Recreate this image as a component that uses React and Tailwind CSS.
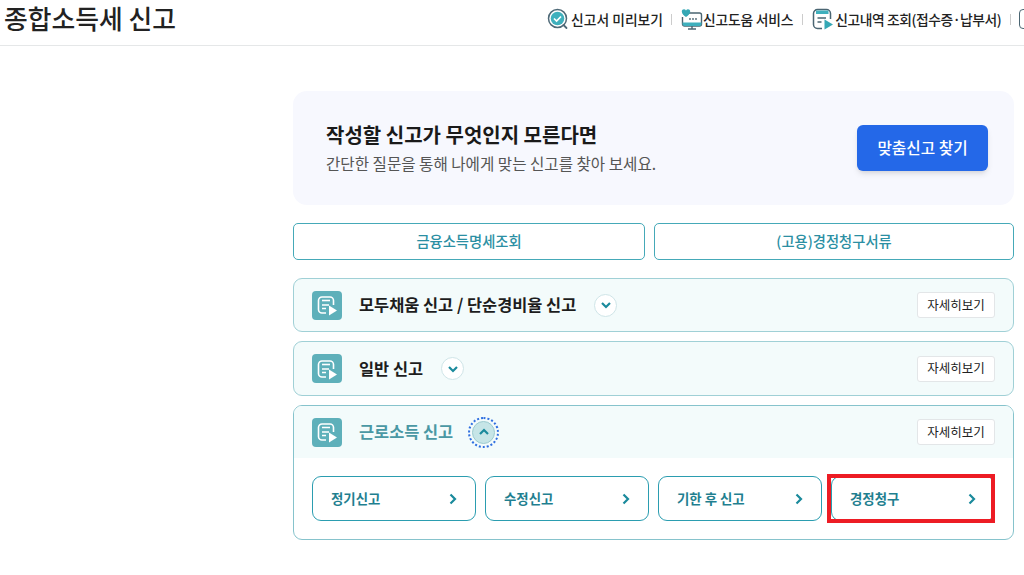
import React from 'react';

const KR = "font-['Noto_Sans_CJK_KR','Noto_Sans',sans-serif]";

function PreviewIcon() {
  return (
    <svg width="22" height="22" viewBox="0 0 22 22" fill="none">
      <circle cx="10.5" cy="10.5" r="9" stroke="#4f6a78" strokeWidth="1.5" />
      <circle cx="10.500" cy="10.500" r="6.800" fill="#3fb0bd" />
      <path d="M7 10.500l2.600 2.600 4.400-4.600" stroke="#fff" strokeWidth="1.700" fill="none" />
      <path d="M16.500 17l3 3" stroke="#4f6a78" strokeWidth="1.800" strokeLinecap="round" />
    </svg>
  );
}

function HelpIcon() {
  return (
    <svg width="22" height="22" viewBox="0 0 22 22" fill="none">
      <path d="M8 5h10.500A2 2 0 0 1 20.500 7v9a2 2 0 0 1-2 2h-15a2 2 0 0 1-2-2V9" stroke="#4a6572" strokeWidth="1.400" fill="#fff" />
      <path d="M1.500 14.500h19V16a2 2 0 0 1-2 2h-15a2 2 0 0 1-2-2z" fill="#3fb0bd" />
      <path d="M5 9C3.200 7.500 0.800 5.800 0.800 3.400 0.800 1.200 3.700 0.400 5 2.400 6.300 0.400 9.200 1.200 9.200 3.400 9.200 5.800 6.800 7.500 5 9z" fill="#35a8b5" />
      <circle cx="9" cy="11" r="0.900" fill="#4a6572" />
      <circle cx="12" cy="11" r="0.900" fill="#4a6572" />
      <circle cx="15" cy="11" r="0.900" fill="#4a6572" />
      <path d="M11 18v3M7 21h8" stroke="#4a6572" strokeWidth="1.400" />
    </svg>
  );
}

function HistoryIcon() {
  return (
    <svg width="22" height="22" viewBox="0 0 22 22" fill="none">
      <path d="M10 20.500H5.500a4 4 0 0 1-4-4v-11a4 4 0 0 1 4-4h9a4 4 0 0 1 4 4V11" stroke="#4a6572" strokeWidth="1.500" />
      <path d="M4 2.500h12.500V6H4z" fill="#3fb0bd" />
      <path d="M5.500 10h8.500M5.500 14h4" stroke="#4a6572" strokeWidth="1.400" />
      <path d="M12.500 11.500l8.500 5-8.500 5z" fill="#35a8b5" />
    </svg>
  );
}

function ReportIcon() {
  return (
    <span className="flex h-[29px] w-[30px] shrink-0 items-center justify-center rounded-[4px] bg-[#5eb0ba]">
      <svg width="24" height="24" viewBox="0 0 24 24" fill="none">
        <path d="M11 20H7a3.500 3.500 0 0 1-3.500-3.500v-9A3.500 3.500 0 0 1 7 4h8a3.500 3.500 0 0 1 3.500 3.500V12" stroke="#fff" strokeWidth="1.600" />
        <path d="M7 7.500h8" stroke="#fff" strokeWidth="1.600" />
        <path d="M7 12h7M7 15.500h4" stroke="#fff" strokeWidth="1.400" />
        <path d="M14 12.500l8 5-8 5z" fill="#fff" />
      </svg>
    </span>
  );
}

function Toggle({ up }) {
  return (
    <svg width="12" height="12" viewBox="0 0 12 12" fill="none">
      <path d={up ? 'M2 8l4-4 4 4' : 'M2 4l4 4 4-4'} stroke="#1a8a9c" strokeWidth="2.200" />
    </svg>
  );
}

function DetailButton() {
  return (
    <button className="ml-auto h-[26px] w-[78px] rounded-[3px] border border-[#e3e6e8] bg-white text-[12.500px] text-[#222]">
      자세히보기
    </button>
  );
}

function Row({ title, className }) {
  return (
    <div className={`flex items-center rounded-[9px] border border-[#a0d0d6] bg-[#f3fbfb] pl-[18px] pr-[18px] ${className}`}>
      <ReportIcon />
      <span className="ml-[17px] pb-[1px] text-[16.400px] font-bold text-[#1d1d1d]">{title}</span>
      <span className="ml-[18px] flex h-[23px] w-[23px] items-center justify-center rounded-full border border-[#cfe5e8] bg-white">
        <Toggle />
      </span>
      <DetailButton />
    </div>
  );
}

function SubButton({ label }) {
  return (
    <button className="flex h-[45px] w-[164px] items-center justify-between rounded-[9px] border border-[#2b9db0] bg-white pl-[18px] pr-[16px] text-[13.400px] font-bold text-[#1f7f90]">
      <span className="pb-[1px]">{label}</span>
      <svg width="12" height="12" viewBox="0 0 12 12" fill="none">
        <path d="M3.500 1.500L8 6l-4.500 4.500" stroke="#1a8a9c" strokeWidth="2.200" />
      </svg>
    </button>
  );
}

export default function App() {
  return (
    <div className={`relative h-[575px] w-[1024px] overflow-hidden bg-white ${KR}`}>
      <header className="flex h-[46px] items-start border-b border-[#e5e7e8]">
        <h1 className="w-[547px] shrink-0 pl-[4px] text-[25.800px] font-medium leading-[36px] text-[#222]">종합소득세 신고</h1>
        <nav className="flex h-[38px] shrink-0 items-center whitespace-nowrap text-[13.800px] font-medium text-[#222]">
          <PreviewIcon />
          <span className="ml-[2px]">신고서 미리보기</span>
          <span className="ml-[8px] mr-[9px] h-[11px] w-px bg-[#ccc]" />
          <HelpIcon />
          <span className="tracking-[-0.2px]">신고도움 서비스</span>
          <span className="ml-[9px] mr-[9px] h-[11px] w-px bg-[#ccc]" />
          <HistoryIcon />
          <span className="ml-[1px] tracking-[-0.45px]">신고내역 조회(접수증·납부서)</span>
          <span className="ml-[9px] mr-[8px] h-[11px] w-px bg-[#ccc]" />
          <span className="h-[20px] w-[14px] rounded-[4px] border border-[#4a6572]" />
        </nav>
      </header>

      <main className="ml-[293px] w-[721px] pt-[45px]">
        <section className="flex h-[114px] items-center justify-between rounded-[14px] bg-[#f7f8fe] pl-[33px] pr-[26px]">
          <div className="pb-[2px]">
            <h2 className="text-[20px] font-bold leading-[28px] text-[#1a1a1a]">작성할 신고가 무엇인지 모른다면</h2>
            <p className="mt-[3px] text-[15.600px] leading-[22px] text-[#555]">간단한 질문을 통해 나에게 맞는 신고를 찾아 보세요.</p>
          </div>
          <button className="h-[46px] w-[131px] rounded-[6px] bg-[#2468e8] text-[15.700px] font-medium text-white shadow-md">
            맞춤신고 찾기
          </button>
        </section>

        <div className="mt-[18px] flex gap-[9px]">
          <button className="h-[37px] w-[352px] rounded-[5px] border border-[#45a9b8] bg-white pb-[1px] text-[14.300px] font-medium text-[#2b8fa3]">금융소득명세조회</button>
          <button className="h-[37px] flex-1 rounded-[5px] border border-[#45a9b8] bg-white pb-[1px] text-[14.300px] font-medium text-[#2b8fa3]">(고용)경정청구서류</button>
        </div>

        <div className="mt-[18px] flex flex-col gap-[9px]">
          <Row title="모두채움 신고 / 단순경비율 신고" className="h-[54px]" />
          <Row title="일반 신고" className="h-[55px]" />

          <div className="h-[135px] overflow-hidden rounded-[9px] border border-[#86c3cc] bg-white">
            <div className="flex h-[52px] items-center bg-[#f3fbfb] pl-[18px] pr-[18px]">
              <ReportIcon />
              <span className="ml-[17px] pb-[1px] text-[16.400px] font-bold text-[#4a98a4]">근로소득 신고</span>
              <span className="ml-[15px] flex h-[31px] w-[31px] items-center justify-center rounded-full border-2 border-dotted border-[#2f6fe0]">
                <span className="flex h-[23px] w-[23px] items-center justify-center rounded-full border border-[#9ccbd0] bg-[#c6e5e7]">
                  <Toggle up />
                </span>
              </span>
              <DetailButton />
            </div>
            <div className="flex gap-[9px] pl-[18px] pt-[18px]">
              <SubButton label="정기신고" />
              <SubButton label="수정신고" />
              <SubButton label="기한 후 신고" />
              <SubButton label="경정청구" />
            </div>
          </div>
        </div>
      </main>

      {/* annotation drawn over the screenshot */}
      <div className="absolute left-[827px] top-[474px] h-[49px] w-[168px] border-[4px] border-[#ed1c24]" />
    </div>
  );
}
